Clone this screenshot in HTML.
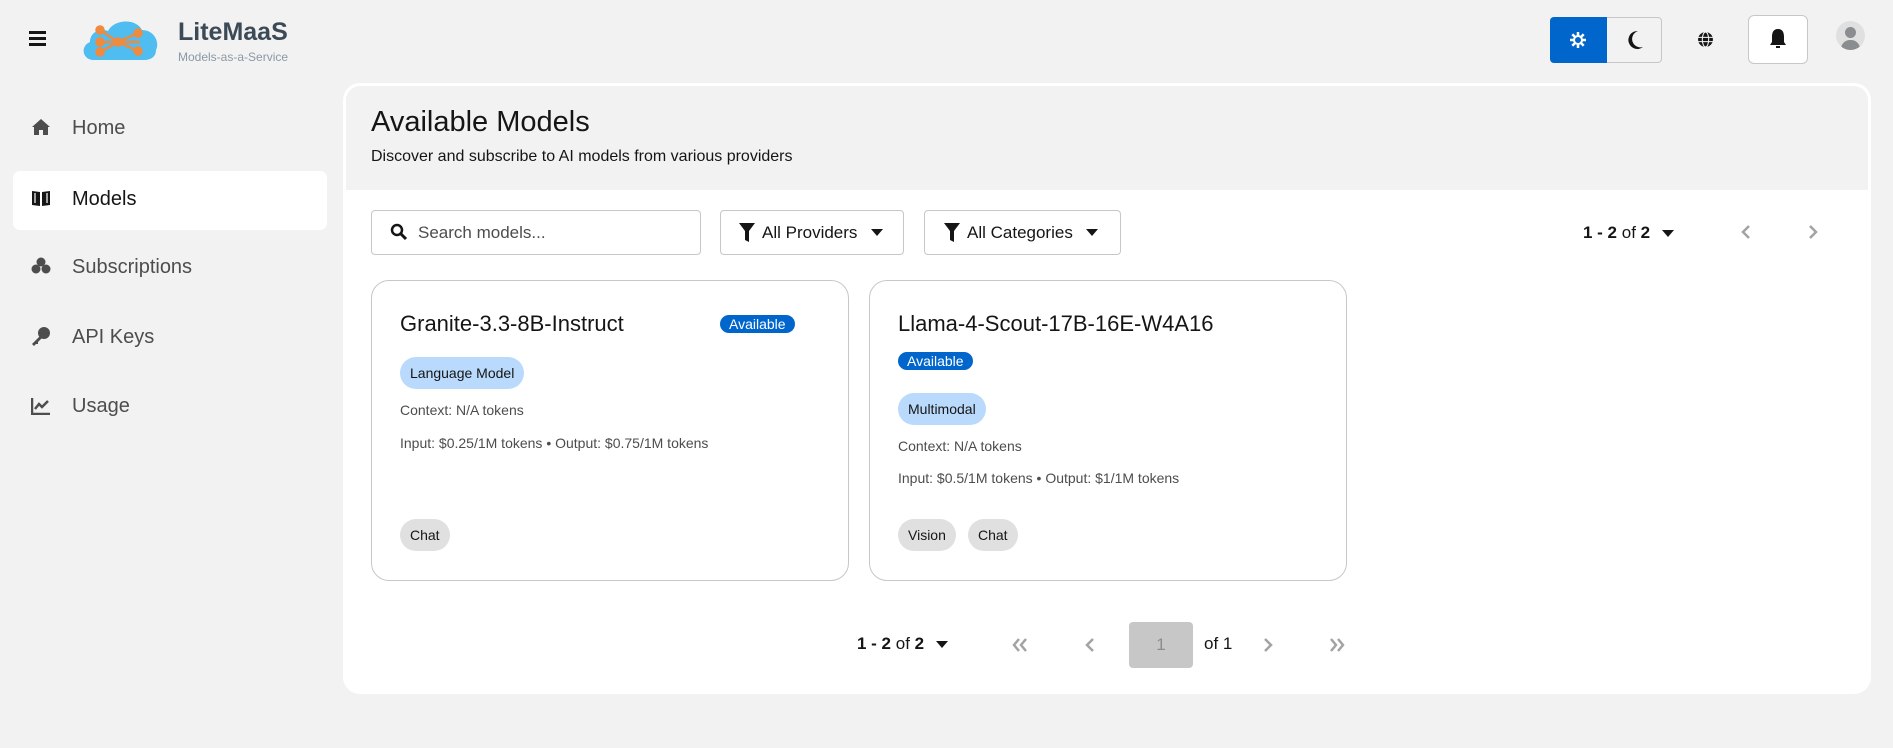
<!DOCTYPE html>
<html><head><meta charset="utf-8"><style>
*{box-sizing:border-box;margin:0;padding:0}
body{width:1893px;height:748px;background:#f2f2f2;font-family:"Liberation Sans",sans-serif;color:#151515;position:relative;overflow:hidden}
.a{position:absolute}
.nav{position:absolute;left:72px;font-size:20px;color:#4d4d4d}
.ico{position:absolute;left:31px}
.btn{position:absolute;border:1px solid #c7c7c7;border-radius:4px;background:#fff;font-size:17px;display:flex;align-items:center}
.card{position:absolute;top:280px;height:301px;border:1px solid #c7c7c7;border-radius:18px;background:#fff}
.t{position:absolute;font-size:22px;color:#151515}
.badge{position:absolute;background:#0066cc;color:#fff;font-size:14px;border-radius:10px;height:18px;line-height:18px;padding:0 9px}
.chip{position:absolute;border-radius:16px;height:32px;line-height:32px;padding:0 10px;font-size:14px;color:#151515}
.sm{position:absolute;font-size:14px;color:#4d4d4d}
</style></head><body>
<!-- header -->
<div class="a" style="left:29px;top:31px;width:17px;height:3px;background:#151515;box-shadow:0 6px 0 #151515,0 12px 0 #151515"></div>
<svg class="a" style="left:80px;top:16px" width="80" height="46" viewBox="0 0 80 46">
<path d="M14 44 C2 44 0 30 10 26 C10 16 20 12 28 15 C34 3 56 2 62 14 C74 14 80 26 76 34 C76 40 72 44 64 44 Z" fill="#4fbdef"/>
<g stroke="#f08a3c" stroke-width="2.5" fill="#f08a3c"><line x1="20" y1="14" x2="38" y2="26"/><line x1="20" y1="26" x2="60" y2="26"/><line x1="20" y1="36" x2="38" y2="26"/><line x1="38" y1="26" x2="58" y2="17"/><line x1="38" y1="26" x2="58" y2="35"/>
<circle cx="20" cy="14" r="3.5"/><circle cx="20" cy="26" r="3.5"/><circle cx="20" cy="36" r="3.5"/><circle cx="38" cy="26" r="3.5"/><circle cx="58" cy="17" r="3.5"/><circle cx="58" cy="35" r="3.5"/></g></svg>
<div class="a" style="left:178px;top:18px;font-size:25px;font-weight:bold;color:#3c4a56">LiteMaaS</div>
<div class="a" style="left:178px;top:50px;font-size:12px;color:#8a99a6">Models-as-a-Service</div>
<div class="a" style="left:1550px;top:17px;width:112px;height:46px;border:1px solid #c7c7c7;border-radius:4px;background:#f2f2f2"></div>
<div class="a" style="left:1550px;top:17px;width:57px;height:46px;background:#0066cc;border-radius:4px 0 0 4px"></div>
<svg class="a" style="left:1569px;top:31px" width="18" height="18" viewBox="0 0 18 18"><g stroke="#fff" stroke-width="2.5"><line x1="9" y1="1" x2="9" y2="17"/><line x1="1" y1="9" x2="17" y2="9"/><line x1="3.3" y1="3.3" x2="14.7" y2="14.7"/><line x1="3.3" y1="14.7" x2="14.7" y2="3.3"/></g><circle cx="9" cy="9" r="5" fill="#fff"/><circle cx="9" cy="9" r="3" fill="#0066cc"/></svg>
<svg class="a" style="left:1626px;top:30px" width="18" height="20" viewBox="0 0 18 20"><path d="M12 1 A9 9 0 1 0 17 17 A8 8 0 0 1 12 1Z" fill="#151515"/></svg>
<svg class="a" style="left:1697px;top:31px" width="17" height="17" viewBox="0 0 16 16"><circle cx="8" cy="8" r="7" fill="#151515"/><g stroke="#f2f2f2" stroke-width="1" fill="none"><line x1="1" y1="6" x2="15" y2="6"/><line x1="1" y1="10" x2="15" y2="10"/><ellipse cx="8" cy="8" rx="3" ry="7"/></g></svg>
<div class="a" style="left:1748px;top:15px;width:60px;height:49px;border:1px solid #c7c7c7;border-radius:6px;background:#fff"></div>
<svg class="a" style="left:1769px;top:28px" width="18" height="21" viewBox="0 0 18 21"><path d="M9 1 C4 1 3 5 3 9 L3 14 L1 17 L17 17 L15 14 L15 9 C15 5 14 1 9 1Z" fill="#151515"/><rect x="7" y="18" width="4" height="2" fill="#151515"/></svg>
<div class="a" style="left:1836px;top:21px;width:29px;height:29px;border-radius:50%;background:#e0e0e0;overflow:hidden"><div class="a" style="left:9px;top:6px;width:11px;height:11px;border-radius:50%;background:#8a8d90"></div><div class="a" style="left:5px;top:19px;width:19px;height:14px;border-radius:9px 9px 0 0;background:#8a8d90"></div></div>
<!-- sidebar -->
<div class="a" style="left:13px;top:171px;width:314px;height:59px;background:#fff;border-radius:7px"></div>
<svg class="ico" style="top:118px" width="20" height="18" viewBox="0 0 20 18"><path d="M10 1 L1 9 L3 9 L3 17 L8 17 L8 12 L12 12 L12 17 L17 17 L17 9 L19 9Z" fill="#4d4d4d"/></svg>
<svg class="ico" style="top:189px" width="20" height="18" viewBox="0 0 20 18"><path d="M1 2 L9 3 L9 17 L1 16Z M11 3 L19 2 L19 16 L11 17Z" fill="#151515"/><path d="M4 4 v10 M16 4 v10" stroke="#fff" stroke-width="1.2"/></svg>
<svg class="ico" style="top:257px" width="20" height="18" viewBox="0 0 20 18"><circle cx="10" cy="5" r="4.5" fill="#4d4d4d"/><circle cx="5" cy="12" r="4.5" fill="#4d4d4d"/><circle cx="15" cy="12" r="4.5" fill="#4d4d4d"/></svg>
<svg class="ico" style="top:326px" width="20" height="20" viewBox="0 0 20 20"><circle cx="13" cy="7" r="6" fill="#4d4d4d"/><path d="M9 10 L1 18 L3 20 L5 18 L7 18 L7 16 L11 12Z" fill="#4d4d4d"/></svg>
<svg class="ico" style="top:397px" width="20" height="18" viewBox="0 0 20 18"><path d="M1 1 V17 H19" stroke="#4d4d4d" stroke-width="2.5" fill="none"/><path d="M4 12 L8 7 L11 10 L17 4" stroke="#4d4d4d" stroke-width="2.5" fill="none"/></svg>
<div class="nav" style="top:117px">Home</div>
<div class="nav" style="top:188px;color:#151515">Models</div>
<div class="nav" style="top:256px">Subscriptions</div>
<div class="nav" style="top:326px">API Keys</div>
<div class="nav" style="top:395px">Usage</div>
<!-- main -->
<div class="a" style="left:343px;top:83px;width:1528px;height:611px;background:#fff;border-radius:17px;overflow:hidden">
<div class="a" style="left:3px;top:3px;width:1522px;height:104px;background:#f2f2f2;border-radius:14px 14px 0 0"></div>
</div>
<div class="a" style="left:371px;top:106px;font-size:29px;color:#151515">Available Models</div>
<div class="a" style="left:371px;top:148px;font-size:16px;color:#151515">Discover and subscribe to AI models from various providers</div>
<div class="btn" style="left:371px;top:210px;width:330px;height:45px;color:#4d4d4d;padding-left:46px">Search models...</div>
<svg class="a" style="left:390px;top:223px" width="18" height="18" viewBox="0 0 18 18"><circle cx="7" cy="7" r="5" stroke="#151515" stroke-width="2.5" fill="none"/><line x1="11" y1="11" x2="16" y2="16" stroke="#151515" stroke-width="3"/></svg>
<div class="btn" style="left:720px;top:210px;width:184px;height:45px;padding-left:41px">All Providers</div>
<div class="btn" style="left:924px;top:210px;width:197px;height:45px;padding-left:42px">All Categories</div>
<svg class="a" style="left:739px;top:223px" width="16" height="19" viewBox="0 0 16 19"><path d="M0 0 H16 L10 8 V19 L6 17 V8Z" fill="#151515"/></svg>
<svg class="a" style="left:944px;top:223px" width="16" height="19" viewBox="0 0 16 19"><path d="M0 0 H16 L10 8 V19 L6 17 V8Z" fill="#151515"/></svg>
<svg class="a" style="left:871px;top:229px" width="12" height="7"><path d="M0 0H12L6 7Z" fill="#151515"/></svg>
<svg class="a" style="left:1086px;top:229px" width="12" height="7"><path d="M0 0H12L6 7Z" fill="#151515"/></svg>
<div class="a" style="left:1583px;top:223px;font-size:17px"><b>1 - 2</b> of <b>2</b></div>
<svg class="a" style="left:1662px;top:230px" width="12" height="7"><path d="M0 0H12L6 7Z" fill="#151515"/></svg>
<svg class="a" style="left:1741px;top:225px" width="10" height="14"><path d="M8 1 L2 7 L8 13" stroke="#a3a3a3" stroke-width="2.5" fill="none"/></svg>
<svg class="a" style="left:1808px;top:225px" width="10" height="14"><path d="M2 1 L8 7 L2 13" stroke="#a3a3a3" stroke-width="2.5" fill="none"/></svg>
<!-- cards -->
<div class="card" style="left:371px;width:478px"></div>
<div class="card" style="left:869px;width:478px"></div>
<div class="t" style="left:400px;top:311px">Granite-3.3-8B-Instruct</div>
<div class="badge" style="left:720px;top:315px">Available</div>
<div class="chip" style="left:400px;top:357px;background:#b9dafc">Language Model</div>
<div class="sm" style="left:400px;top:402px">Context: N/A tokens</div>
<div class="sm" style="left:400px;top:435px">Input: $0.25/1M tokens • Output: $0.75/1M tokens</div>
<div class="chip" style="left:400px;top:519px;background:#e0e0e0">Chat</div>
<div class="t" style="left:898px;top:311px">Llama-4-Scout-17B-16E-W4A16</div>
<div class="badge" style="left:898px;top:352px">Available</div>
<div class="chip" style="left:898px;top:393px;background:#b9dafc">Multimodal</div>
<div class="sm" style="left:898px;top:438px">Context: N/A tokens</div>
<div class="sm" style="left:898px;top:470px">Input: $0.5/1M tokens • Output: $1/1M tokens</div>
<div class="chip" style="left:898px;top:519px;background:#e0e0e0">Vision</div>
<div class="chip" style="left:968px;top:519px;background:#e0e0e0">Chat</div>
<!-- bottom pagination -->
<div class="a" style="left:857px;top:634px;font-size:17px"><b>1 - 2</b> of <b>2</b></div>
<svg class="a" style="left:936px;top:641px" width="12" height="7"><path d="M0 0H12L6 7Z" fill="#151515"/></svg>
<svg class="a" style="left:1012px;top:638px" width="16" height="14"><path d="M7 1 L2 7 L7 13 M14 1 L9 7 L14 13" stroke="#a3a3a3" stroke-width="2.5" fill="none"/></svg>
<svg class="a" style="left:1085px;top:638px" width="10" height="14"><path d="M8 1 L2 7 L8 13" stroke="#a3a3a3" stroke-width="2.5" fill="none"/></svg>
<div class="a" style="left:1129px;top:622px;width:64px;height:46px;background:#c7c7c7;border-radius:4px;text-align:center;line-height:46px;font-size:17px;color:#8a8d90">1</div>
<div class="a" style="left:1204px;top:634px;font-size:17px">of 1</div>
<svg class="a" style="left:1263px;top:638px" width="10" height="14"><path d="M2 1 L8 7 L2 13" stroke="#a3a3a3" stroke-width="2.5" fill="none"/></svg>
<svg class="a" style="left:1329px;top:638px" width="16" height="14"><path d="M2 1 L7 7 L2 13 M9 1 L14 7 L9 13" stroke="#a3a3a3" stroke-width="2.5" fill="none"/></svg>
</body></html>
